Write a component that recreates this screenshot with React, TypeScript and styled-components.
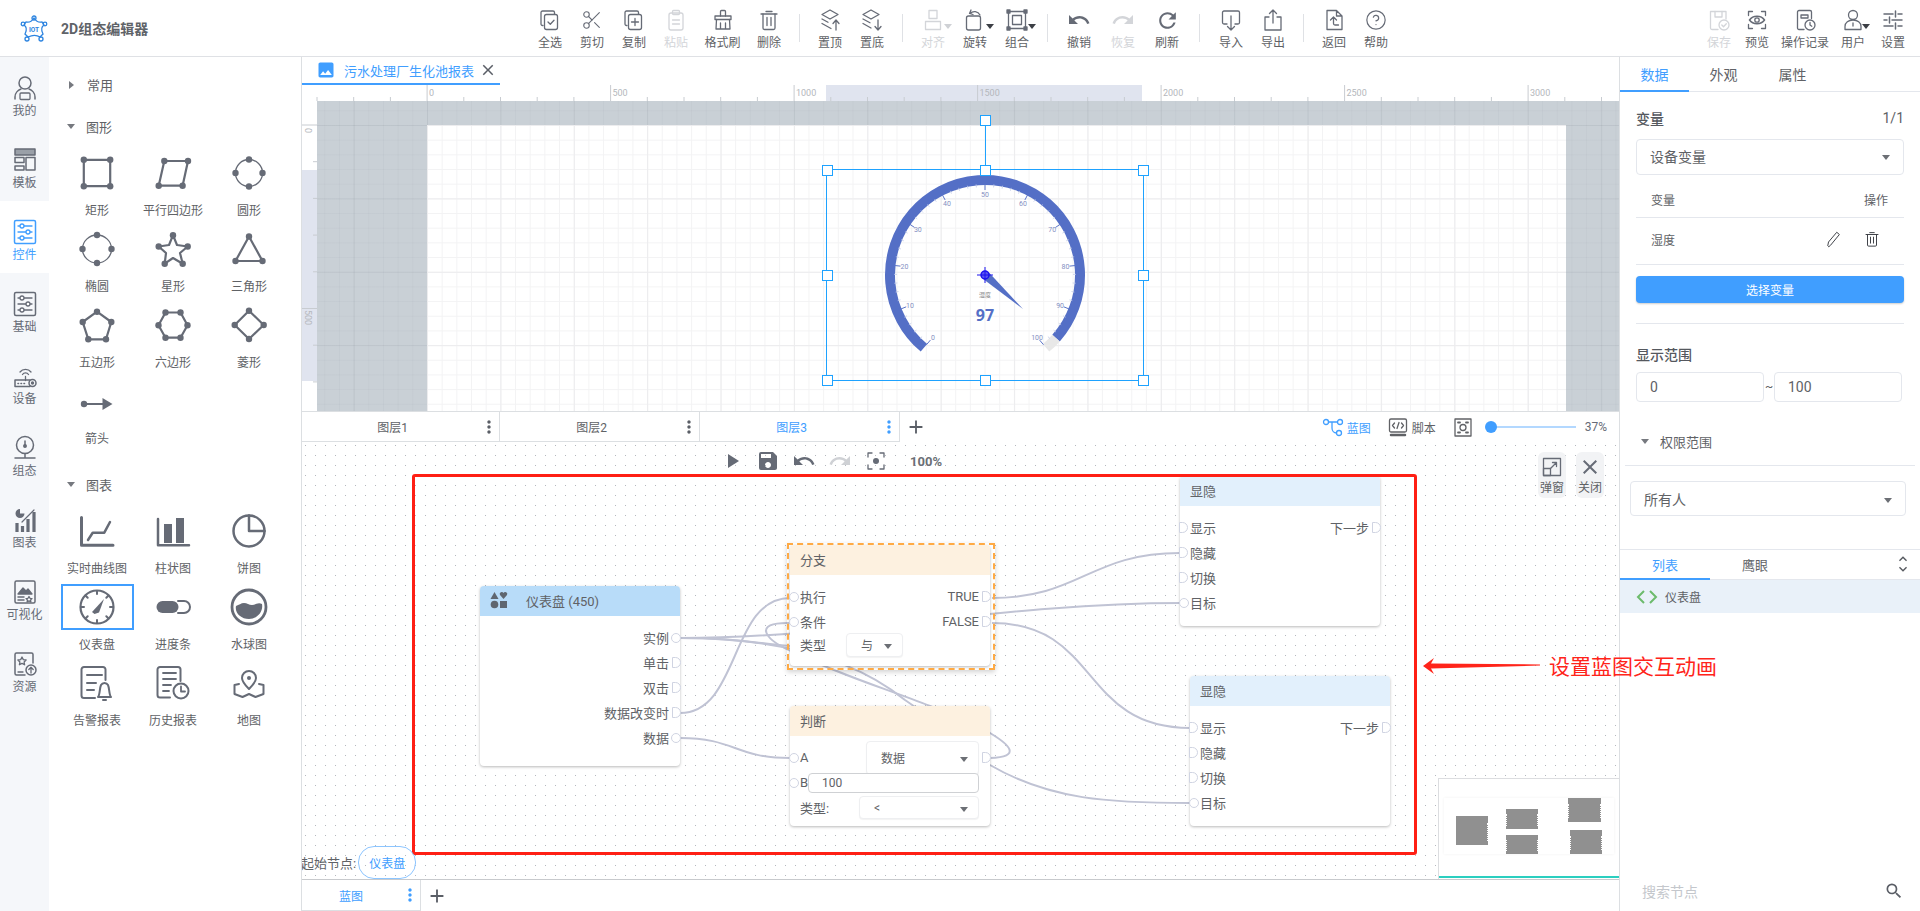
import React from 'react'
import styled, { createGlobalStyle } from 'styled-components'
import { Scissors, CircleHelp } from 'lucide-react'
import {
  MdUndo,
  MdRedo,
  MdRefresh,
  MdPlayArrow,
  MdSave,
  MdMoreVert,
  MdAdd,
  MdClose,
  MdImage,
  MdSearch,
  MdKeyboardArrowUp,
  MdKeyboardArrowDown,
} from 'react-icons/md'

const BLUE = '#409eff'
const TEXT = '#606266'
const ICON = '#666b76'

const GlobalStyle = createGlobalStyle`
  html, body {
    margin: 0;
    padding: 0;
    background: #fff;
    overflow: hidden;
    font-family: Roboto, "Noto Sans CJK SC", sans-serif;
    font-size: 12px;
    color: ${TEXT};
  }
  * { box-sizing: border-box; }
`

const Page = styled.div`
  position: relative;
  width: 1920px;
  height: 911px;
  display: flex;
  flex-direction: column;
  overflow: hidden;
`

const Line = styled.svg`
  fill: none;
  stroke: currentColor;
  stroke-width: 1.3;
  stroke-linejoin: round;
  stroke-linecap: round;
  display: block;
`

/* header */
const Header = styled.header`
  height: 57px;
  flex: none;
  display: flex;
  border-bottom: 1px solid #dfe1e5;
  padding-right: 6px;
`

const Brand = styled.div`
  width: 529px;
  flex: none;
  display: flex;
  align-items: center;
  padding-left: 20px;
  gap: 13px;
  height: 56px;
`

const BrandTitle = styled.span`
  font-size: 14px;
  font-weight: 700;
  color: #5f6368;
`

const Tool = styled.div<{ $w?: number; $off?: boolean }>`
  position: relative;
  width: ${(p) => p.$w ?? 42}px;
  flex: none;
  padding-top: 7px;
  display: flex;
  flex-direction: column;
  align-items: center;
  color: ${(p) => (p.$off ? '#d3d5d9' : ICON)};
`

const ToolIcon = styled.div`
  height: 26px;
  display: flex;
  align-items: center;
  justify-content: center;
`

const ToolLabel = styled.span<{ $off?: boolean }>`
  margin-top: 2px;
  line-height: 16px;
  white-space: nowrap;
  color: ${(p) => (p.$off ? '#d3d5d9' : TEXT)};
`

const ToolCaret = styled.i<{ $off?: boolean }>`
  position: absolute;
  right: 2px;
  top: 24px;
  border-left: 4px solid transparent;
  border-right: 4px solid transparent;
  border-top: 5px solid ${(p) => (p.$off ? '#cfd1d5' : '#3c3f45')};
`

const ToolSep = styled.div<{ $l?: number; $r?: number }>`
  width: 1px;
  height: 28px;
  flex: none;
  margin: 14px ${(p) => p.$r ?? 9}px 0 ${(p) => p.$l ?? 9}px;
  background: #dfe1e5;
`

const Spacer = styled.div`
  flex: 1;
`

/* body */
const Body = styled.div`
  flex: 1;
  display: flex;
  min-height: 0;
`

const Rail = styled.nav`
  width: 49px;
  flex: none;
  background: #f5f7fa;
`

const RailItem = styled.div<{ $active?: boolean }>`
  height: 72px;
  padding-top: 16px;
  display: flex;
  flex-direction: column;
  align-items: center;
  color: ${(p) => (p.$active ? BLUE : ICON)};
  background: ${(p) => (p.$active ? '#fff' : 'transparent')};
`

const RailLabel = styled.span`
  line-height: 16px;
  white-space: nowrap;
  color: inherit;
`

const ShapePanel = styled.aside`
  width: 252px;
  flex: none;
  padding-top: 9px;
`

const SectionHead = styled.div`
  height: 40px;
  display: flex;
  align-items: center;
  padding-left: 19px;
  font-size: 13px;
`

const FirstHead = styled(SectionHead)`
  padding-bottom: 3px;
`

const Tri = styled.i<{ $open?: boolean }>`
  width: 0;
  height: 0;
  margin-right: ${(p) => (p.$open ? 11 : 13)}px;
  ${(p) =>
    p.$open
      ? `border-left: 4.5px solid transparent; border-right: 4.5px solid transparent; border-top: 5px solid #76797f; margin-left: -1px;`
      : `border-top: 4.5px solid transparent; border-bottom: 4.5px solid transparent; border-left: 5px solid #76797f; margin-left: 1px;`}
`

const ShapeGrid = styled.div<{ $mb?: number }>`
  display: grid;
  grid-template-columns: repeat(3, 76px);
  grid-auto-rows: 76px;
  margin: 4px 0 ${(p) => p.$mb ?? 0}px 10px;
`

const Cell = styled.div`
  display: flex;
  flex-direction: column;
  align-items: center;
`

const CellIcon = styled.div<{ $on?: boolean }>`
  width: 73px;
  height: 46px;
  display: flex;
  align-items: center;
  justify-content: center;
  color: ${ICON};
  border: 2px solid ${(p) => (p.$on ? BLUE : 'transparent')};
`

const CellLabel = styled.span`
  margin-top: 6px;
  line-height: 18px;
  white-space: nowrap;
`

const Center = styled.main`
  width: 1319px;
  flex: none;
  border-left: 1px solid #dcdfe2;
  border-right: 1px solid #dcdfe2;
  display: flex;
  flex-direction: column;
`

const DocTabs = styled.div`
  height: 28px;
  flex: none;
  display: flex;
`

const DocTab = styled.div`
  width: 198px;
  border-bottom: 2px solid ${BLUE};
  display: flex;
  align-items: center;
  padding-left: 14px;
  color: ${BLUE};
  font-size: 13px;
  white-space: nowrap;
  svg { flex: none; }
`

const DocTabText = styled.span`
  margin: 0 5px 0 8px;
`

const CloseMark = styled.span`
  display: flex;
  color: #5a5e66;
`

const Canvas = styled.section`
  height: 327px;
  flex: none;
  border-bottom: 1px solid #dcdfe2;
  display: flex;
  flex-direction: column;
  overflow: hidden;
`

const TopRulerRow = styled.div`
  height: 16px;
  flex: none;
  display: flex;
`

const CanvasBody = styled.div`
  flex: 1;
  display: flex;
  min-height: 0;
`

const gridLines = (minor: string, major: string, ox: number, oy: number) => `
  background-image:
    linear-gradient(to right, ${major} 1px, transparent 1px),
    linear-gradient(to bottom, ${major} 1px, transparent 1px),
    linear-gradient(to right, ${minor} 1px, transparent 1px),
    linear-gradient(to bottom, ${minor} 1px, transparent 1px);
  background-size: 73.4px 73.4px, 73.4px 73.4px, 14.68px 14.68px, 14.68px 14.68px;
  background-position: ${ox}px ${oy}px;
`

const Stage = styled.div`
  flex: 1;
  display: flex;
  padding: 24px 53px 0 110px;
  background-color: #c9d0d6;
  ${gridLines('rgba(120,130,140,.06)', 'rgba(120,130,140,.1)', 110, 24)}
`

const Sheet = styled.div`
  flex: 1;
  position: relative;
  background-color: #fff;
  ${gridLines('#f3f3f4', '#ececee', 0, 0)}
`

const Selection = styled.div`
  position: absolute;
  left: 399px;
  top: 44px;
  width: 318px;
  height: 212px;
  border: 1px solid #1ea2ff;
`

const Handle = styled.i<{ $x: string; $y: string }>`
  position: absolute;
  left: ${(p) => p.$x};
  top: ${(p) => p.$y};
  width: 11px;
  height: 11px;
  margin: -5.5px 0 0 -5.5px;
  background: #fff;
  border: 1.5px solid #1ea2ff;
`

const RotateStem = styled.i`
  position: absolute;
  left: 50%;
  top: -50px;
  width: 1px;
  height: 50px;
  background: #1ea2ff;
`

const GaugeSvg = styled.svg`
  position: absolute;
  left: -1px;
  top: -1px;
`

const LayerBar = styled.div`
  height: 30px;
  flex: none;
  display: flex;
`

const LayerTab = styled.div<{ $w?: number; $on?: boolean }>`
  width: ${(p) => p.$w ?? 200}px;
  flex: none;
  border-right: 1px solid #dcdfe2;
  border-bottom: 1px solid #dcdfe2;
  display: flex;
  align-items: center;
  color: ${(p) => (p.$on ? BLUE : TEXT)};
`

const LayerName = styled.span`
  flex: 1;
  text-align: center;
  padding-left: 4px;
`

const LayerDots = styled.span<{ $on?: boolean }>`
  display: flex;
  color: ${(p) => (p.$on ? BLUE : '#5a5e66')};
`

const AddTab = styled.span`
  margin-left: 5px;
  display: flex;
  align-items: center;
  color: #5a5e66;
`

const ViewTools = styled.div`
  margin-left: auto;
  display: flex;
  align-items: center;
  padding-right: 12px;
  color: ${ICON};
`

const ViewItem = styled.div<{ $on?: boolean; $mr?: number; $gap?: number }>`
  display: flex;
  align-items: center;
  gap: ${(p) => p.$gap ?? 4}px;
  margin-right: ${(p) => p.$mr ?? 18}px;
  color: ${(p) => (p.$on ? BLUE : TEXT)};
`

const SliderTrack = styled.div`
  position: relative;
  width: 85px;
  height: 2px;
  background: #b3d8ff;
  margin-right: 9px;
`

const SliderKnob = styled.i`
  position: absolute;
  left: -6px;
  top: -5px;
  width: 12px;
  height: 12px;
  border-radius: 50%;
  background: ${BLUE};
`

const Blueprint = styled.section`
  position: relative;
  height: 438px;
  flex: none;
  overflow: hidden;
  border-bottom: 1px solid #c8cacd;
  background-color: #fff;
  background-image: radial-gradient(circle at 0.5px 0.5px, #b4b8be 0.6px, transparent 0.8px);
  background-size: 10px 10px;
  background-position: 3px 3px;
`

const BpTools = styled.div`
  position: absolute;
  left: 418px;
  top: 7px;
  display: flex;
  align-items: center;
  gap: 12px;
  color: ${ICON};
`

const BpZoomText = styled.span`
  margin-left: 10px;
  font-size: 13px;
  font-weight: 700;
  color: #6b6f76;
`

const WireLayer = styled.svg`
  position: absolute;
  left: 0;
  top: 0;
  fill: none;
  stroke: #c0c3d4;
  stroke-width: 2;
`

const Node = styled.div<{ $x: number; $y: number; $h: number }>`
  position: absolute;
  left: ${(p) => p.$x - 302}px;
  top: ${(p) => p.$y - 442}px;
  width: 200px;
  height: ${(p) => p.$h}px;
  background: #fff;
  border-radius: 4px;
  box-shadow: 0 1px 3px rgba(0, 0, 0, 0.28);
`

const NodeHead = styled.div<{ $bg: string }>`
  height: 30px;
  display: flex;
  align-items: center;
  padding: 0 0 2px 10px;
  font-size: 13px;
  border-radius: 4px 4px 0 0;
  background: ${(p) => p.$bg};
`

const NodeHeadIcon = styled.span`
  display: flex;
  width: 36px;
  color: #5f6670;
`

const NodeBody = styled.div`
  padding-top: 9px;
`

const Row = styled.div<{ $h?: number }>`
  position: relative;
  height: ${(p) => p.$h ?? 25}px;
  padding: 0 11px 0 10px;
  display: flex;
  align-items: center;
  font-size: 13px;
  white-space: nowrap;
`

const RowEnd = styled.span`
  margin-left: auto;
`

const Port = styled.i<{ $side: 'l' | 'r'; $round?: boolean }>`
  position: absolute;
  ${(p) => (p.$side === 'l' ? 'left: -1px;' : 'right: -1px;')}
  top: 50%;
  width: ${(p) => (p.$round ? 10 : 9)}px;
  height: ${(p) => (p.$round ? 10 : 11)}px;
  margin-top: ${(p) => (p.$round ? -5 : -5.5)}px;
  background: #fff;
  border: 1px solid #d0d4e2;
  border-radius: ${(p) => (p.$round ? '50%' : '0 6px 6px 0')};
`

const NodeSelect = styled.div<{ $w: number; $h: number; $ml?: string }>`
  flex: none;
  width: ${(p) => p.$w}px;
  height: ${(p) => p.$h}px;
  margin-left: ${(p) => p.$ml ?? 'auto'};
  background: #fff;
  border: 1px solid #eeeff1;
  border-radius: 4px;
  box-shadow: 0 1px 1px rgba(0, 0, 0, 0.05);
  display: flex;
  align-items: center;
  justify-content: space-between;
  padding: 0 10px 0 14px;
  font-size: 12px;
`

const NodeInput = styled.div`
  flex: none;
  width: 171px;
  height: 20px;
  margin-left: auto;
  position: relative;
  background: #fff;
  border: 1px solid #cfd1d4;
  border-radius: 4px;
  display: flex;
  align-items: center;
  padding-left: 13px;
  font-size: 12px;
`

const SelectedFrame = styled.div`
  position: absolute;
  left: 484.5px;
  top: 100.5px;
  width: 208px;
  height: 127px;
  border: 2px dashed #ffaa44;
  box-shadow: 0 2px 5px rgba(0, 0, 0, 0.18);
  pointer-events: none;
`

const RedBox = styled.div`
  position: absolute;
  left: 110px;
  top: 32px;
  width: 1005px;
  height: 381px;
  border: 3px solid #ff1f14;
  border-radius: 3px;
`

const FloatBtns = styled.div`
  position: absolute;
  top: 10px;
  right: 15px;
  display: flex;
  gap: 10px;
`

const FloatBtn = styled.div`
  width: 28px;
  height: 46px;
  border-radius: 6px;
  background: #f2f3f5;
  display: flex;
  flex-direction: column;
  align-items: center;
  padding-top: 3px;
  color: ${ICON};
  white-space: nowrap;
`

const FloatLabel = styled.span`
  margin-top: 1px;
  line-height: 16px;
  color: ${TEXT};
`

const StartNode = styled.div`
  position: absolute;
  left: -1px;
  bottom: 0;
  display: flex;
  align-items: center;
  font-size: 13px;
  white-space: nowrap;
`

const StartPill = styled.span`
  width: 58px;
  height: 33px;
  margin-left: 2px;
  border: 1px solid #8cc5ff;
  border-radius: 16px;
  display: flex;
  align-items: center;
  justify-content: center;
  color: ${BLUE};
  font-size: 12px;
`

const Minimap = styled.div`
  position: absolute;
  right: 0;
  bottom: 0;
  width: 181px;
  height: 101px;
  background: #fff;
  border-top: 1px solid #dcdde0;
  border-left: 1px solid #dcdde0;
`

const MiniSheet = styled.div`
  position: absolute;
  left: 5px;
  top: 19px;
  width: 170px;
  height: 56px;
  background: #fff;
  box-shadow: 0 0 3px rgba(0, 0, 0, 0.06);
`

const MiniBlock = styled.i<{ $x: number; $y: number; $w: number; $h: number; $both?: boolean }>`
  position: absolute;
  left: ${(p) => p.$x}px;
  top: ${(p) => p.$y}px;
  width: ${(p) => p.$w}px;
  height: ${(p) => p.$h}px;
  background: #909090;

  &::after,
  &::before {
    content: '';
    position: absolute;
    top: 25%;
    height: 60%;
  }
  &::after {
    right: 0;
    border-right: 1px dotted #fff;
  }
  &::before {
    left: 0;
    ${(p) => (p.$both ? 'border-left: 1px dotted #fff;' : '')}
  }
`

const MiniBar = styled.i`
  position: absolute;
  left: 0;
  right: 0;
  bottom: 1px;
  height: 2px;
  background: #2bcfc0;
`

const BottomTabs = styled.div`
  height: 31px;
  flex: none;
  display: flex;
  align-items: center;
`

const BottomTab = styled.div`
  width: 119px;
  height: 100%;
  display: flex;
  align-items: center;
  border-right: 1px solid #dcdfe2;
  border-bottom: 1px solid #dcdfe2;
  color: ${BLUE};
`

const BottomName = styled.span`
  flex: 1;
  text-align: center;
`

/* right panel */
const Inspector = styled.aside`
  flex: 1;
  display: flex;
  flex-direction: column;
  min-width: 0;
`

const InsTabs = styled.div`
  height: 35px;
  flex: none;
  display: flex;
  border-bottom: 1px solid #e4e7ed;
`

const InsTab = styled.div<{ $on?: boolean; $w?: number }>`
  width: ${(p) => p.$w ?? 69}px;
  height: 35px;
  display: flex;
  align-items: center;
  justify-content: center;
  font-size: 14px;
  color: ${(p) => (p.$on ? BLUE : TEXT)};
  border-bottom: 2px solid ${(p) => (p.$on ? BLUE : 'transparent')};
`

const InsBlock = styled.div`
  padding: 0 16px;
`

const FieldHead = styled.div`
  margin-top: 16px;
  height: 20px;
  display: flex;
  justify-content: space-between;
  align-items: center;
  font-size: 14px;
`

const FieldTitle = styled.span`
  font-weight: 500;
  color: #55585e;
`

const InsSelect = styled.div`
  height: 36px;
  margin-top: 11px;
  border: 1px solid #e4e7ed;
  border-radius: 4px;
  display: flex;
  align-items: center;
  justify-content: space-between;
  padding: 0 13px 3px;
  font-size: 14px;
`

const DownTri = styled.i`
  width: 0;
  height: 0;
  margin-top: 3px;
  border-left: 4px solid transparent;
  border-right: 4px solid transparent;
  border-top: 5px solid #6c6f75;
`

const TableHead = styled.div`
  height: 43px;
  padding: 7px 16px 0 15px;
  display: flex;
  align-items: center;
  justify-content: space-between;
  border-bottom: 1px solid #e4e7ed;
`

const TableRow = styled.div`
  height: 47px;
  padding: 0 15px 4px;
  display: flex;
  align-items: center;
  border-bottom: 1px solid #e4e7ed;
`

const RowActions = styled.div`
  margin-left: auto;
  display: flex;
  gap: 21px;
  margin-right: 8px;
  color: #3c3f45;
`

const PrimaryButton = styled.div`
  height: 27px;
  margin-top: 11px;
  background: ${BLUE};
  color: #fff;
  border-radius: 4px;
  display: flex;
  align-items: center;
  justify-content: center;
  box-shadow: 0 1px 2px rgba(0, 0, 0, 0.2);
`

const Divider = styled.div`
  height: 1px;
  margin-top: 20px;
  background: #e4e7ed;
`

const RangeTitle = styled(FieldHead)`
  margin-top: 20px;
`

const RangeRow = styled.div`
  margin-top: 8px;
  width: 266px;
  display: flex;
  align-items: center;
  justify-content: space-between;
`

const RangeInput = styled.div`
  width: 128px;
  height: 30px;
  border: 1px solid #e4e7ed;
  border-radius: 4px;
  display: flex;
  align-items: center;
  padding-left: 13px;
  font-size: 14px;
`

const CollapseHead = styled.div`
  height: 48px;
  margin: 16px 5px 0;
  padding-left: 17px;
  display: flex;
  align-items: center;
  border-bottom: 1px solid #e4e7ed;
  font-size: 13px;
`

const AccessSelect = styled(InsSelect)`
  margin: 15px 14px 0 10px;
  height: 35px;
  padding: 0 13px;
`

const SubTabs = styled.div`
  margin-top: 33px;
  height: 31px;
  flex: none;
  display: flex;
  border-top: 1px solid #e4e7ed;
  border-bottom: 1px solid #e4e7ed;
`

const SubTab = styled(InsTab)`
  height: 30px;
  font-size: 13px;
`

const SubChevrons = styled.div`
  margin: -1px 9px 0 auto;
  display: flex;
  flex-direction: column;
  justify-content: center;
  color: #55585e;
  svg { margin: -3px 0; }
`

const TreeRow = styled.div`
  height: 33px;
  display: flex;
  align-items: center;
  padding-left: 16px;
  gap: 7px;
  background: #e9f1f9;
`

const SearchRow = styled.div`
  margin-top: auto;
  height: 40px;
  display: flex;
  align-items: center;
  justify-content: space-between;
  padding: 0 16px 0 22px;
  font-size: 14px;
  color: #c4c7cc;
`

const SearchIcon = styled.span`
  display: flex;
  color: #5a5e66;
`

const Callout = styled.div`
  position: absolute;
  left: 1549px;
  top: 652px;
  font-size: 21px;
  line-height: 30px;
  color: #ff241a;
  white-space: nowrap;
`

const CalloutArrow = styled.svg`
  position: absolute;
  left: 1423px;
  top: 658px;
`

/* icons */
const T = (props: { children: React.ReactNode; size?: number }) => (
  <Line width={props.size ?? 24} height={props.size ?? 24} viewBox="0 0 24 24">
    {props.children}
  </Line>
)

const stack = (
  <>
    <path d="M5 17.5H4.5A1.5 1.5 0 0 1 3 16V4.5A1.5 1.5 0 0 1 4.5 3H15a1.5 1.5 0 0 1 1.5 1.5V6" />
    <rect x="6.5" y="6.5" width="13" height="15" rx="2" />
  </>
)

const toolIcons = {
  all: <T>{stack}<path d="M10 14l2.3 2.3 3.7-4" /></T>,
  cut: <Scissors size={22} strokeWidth={1.2} />,
  copy: <T>{stack}<path d="M13 10.5v7M9.5 14h7" /></T>,
  paste: (
    <T>
      <rect x="5" y="5" width="14" height="17" rx="2" />
      <rect x="8.5" y="2.5" width="7" height="4" rx="1" />
      <path d="M8.5 12h7M8.5 16h7" />
    </T>
  ),
  brush: (
    <T>
      <path d="M9.5 8V3.5a1 1 0 0 1 1-1h3a1 1 0 0 1 1 1V8" />
      <path d="M4 8h16v3.5H4z" />
      <path d="M5.5 11.5L5 21h14l-.5-9.5M9.5 15v6M14.5 15v6" />
    </T>
  ),
  trash: (
    <T>
      <path d="M4 6h16M9 3.5h6" />
      <path d="M6 6v14a1.5 1.5 0 0 0 1.5 1.5h9A1.5 1.5 0 0 0 18 20V6" />
      <path d="M10 9.5v8M14 9.5v8" />
    </T>
  ),
  top: (
    <T>
      <path d="M12 2l8 4.5-8 4.5-8-4.5zM4 11l6 3.3M4 15.5l9 5" />
      <path d="M18 22v-9.5M15 15.5l3-3.5 3 3.5" />
    </T>
  ),
  bottom: (
    <T>
      <path d="M11 2l8 4.5-8 4.5-8-4.5zM3 11l7 3.8M3 15.5l8 4.5" />
      <path d="M18 12v10M15 18.5l3 3.5 3-3.5" />
    </T>
  ),
  align: (
    <T>
      <rect x="8" y="2.5" width="8" height="8" />
      <rect x="4.5" y="13.5" width="15" height="8" />
    </T>
  ),
  rotate: (
    <T>
      <rect x="3.5" y="8" width="14" height="14" rx="2" />
      <path d="M7 5.5c3-3 8-2.5 10 1.5M8 2L6.5 5.5 10 6.5" />
    </T>
  ),
  group: (
    <T>
      <rect x="3.5" y="3.5" width="17" height="17" />
      <rect x="7.5" y="7.5" width="9" height="9" />
      <rect x="2" y="2" width="3" height="3" fill="currentColor" />
      <rect x="19" y="2" width="3" height="3" fill="currentColor" />
      <rect x="2" y="19" width="3" height="3" fill="currentColor" />
      <rect x="19" y="19" width="3" height="3" fill="currentColor" />
    </T>
  ),
  imp: <T><path d="M8 16H5a1.5 1.5 0 0 1-1.5-1.5V4.5A1.5 1.5 0 0 1 5 3h14a1.5 1.5 0 0 1 1.5 1.5v10A1.5 1.5 0 0 1 19 16h-3M12 8v14M8.5 18.5L12 22l3.5-3.5" /></T>,
  exp: <T><path d="M8 9H4v13h16V9h-4M12 2v13M8.5 5.5L12 2l3.5 3.5" /></T>,
  back: (
    <T>
      <path d="M5 2.5h9.5L20 8v13.5H5zM14.5 2.5V8H20" />
      <path d="M8.5 12l3-3 3 3M11.5 9v6.5c0 .8.5 1.5 1.5 1.5h3.5" />
    </T>
  ),
  help: <CircleHelp size={22} strokeWidth={1.3} />,
  save: (
    <T>
      <path d="M11 21.5H5A1.5 1.5 0 0 1 3.5 20V3.5H19V11" />
      <path d="M8 3.5V9h7V3.5" />
      <circle cx="17" cy="17" r="5" />
      <path d="M14.8 17l1.7 1.7 2.8-3" />
    </T>
  ),
  view: (
    <T>
      <path d="M3.5 7.5v-4h4M16.5 3.5h4v4M20.5 16.5v4h-4M7.5 20.5h-4v-4" />
      <path d="M4.5 12c3.5-5 11.5-5 15 0-3.5 5-11.5 5-15 0z" strokeWidth="1.6" />
      <circle cx="12" cy="12" r="2.2" />
    </T>
  ),
  history: (
    <T>
      <path d="M11 21.5H6A1.5 1.5 0 0 1 4.5 20V4A1.5 1.5 0 0 1 6 2.5h11A1.5 1.5 0 0 1 18.5 4v6.5" />
      <path d="M8 7h7v3H8z" />
      <circle cx="17" cy="17" r="5" />
      <path d="M17 14.5V17l1.8 1.2" />
    </T>
  ),
  user: (
    <T>
      <circle cx="12" cy="7" r="4.5" />
      <path d="M4 21.5v-3c0-4 3.5-6.5 8-6.5s8 2.5 8 6.5v3zM12 15v3" />
    </T>
  ),
  setting: (
    <T>
      <path d="M3 6h9M17 6h4M14.5 3v6M3 12h3M11 12h10M8.5 9v6M3 18h9M17 18h4M14.5 15v6" strokeWidth="1.5" />
    </T>
  ),
}

const R = (props: { children: React.ReactNode }) => (
  <Line width={30} height={30} viewBox="0 0 30 30">
    {props.children}
  </Line>
)

const sliders = (
  <>
    <rect x="4.5" y="3.5" width="21" height="23" rx="1.5" strokeWidth="1.5" />
    <path d="M8 9h14M8 15h14M8 21h14" />
    <circle cx="12" cy="9" r="2" fill="#fff" />
    <circle cx="18" cy="15" r="2" fill="#fff" />
    <circle cx="12" cy="21" r="2" fill="#fff" />
  </>
)

const railIcons = {
  mine: (
    <R>
      <circle cx="15" cy="10" r="6" strokeWidth="1.5" />
      <path d="M5 26v-2c0-4 3-7 6-8M25 26v-2c0-4-3-7-6-8" strokeWidth="1.5" />
      <rect x="10" y="20" width="10" height="6.5" rx="1" />
    </R>
  ),
  template: (
    <R>
      <rect x="5" y="4" width="20" height="6" strokeWidth="1.5" fill="#9aa0a8" />
      <rect x="5" y="12.5" width="9" height="5" strokeWidth="1.5" />
      <rect x="5" y="21" width="9" height="4" strokeWidth="1.5" />
      <rect x="16" y="12.5" width="9" height="12.5" strokeWidth="1.5" />
    </R>
  ),
  widget: <R>{sliders}</R>,
  device: (
    <R>
      <path d="M10 11a7 7 0 0 1 11 0M12.5 13.5a3.5 3.5 0 0 1 6 0M15.5 15.5v4" />
      <rect x="5" y="19" width="15" height="6.5" strokeWidth="1.5" />
      <circle cx="22.5" cy="22" r="3.5" strokeWidth="1.5" fill="#f5f7fa" />
      <circle cx="22.5" cy="22" r="1" fill="currentColor" />
      <path d="M8 22.5h.5M11 22.5h.5M14 22.5h.5" strokeWidth="1.6" />
    </R>
  ),
  config: (
    <R>
      <circle cx="15" cy="12" r="8.5" strokeWidth="1.5" />
      <path d="M5 25h20M15 20.5V25M15 8v5" strokeWidth="1.5" />
      <circle cx="15" cy="13" r="1.3" fill="currentColor" />
    </R>
  ),
  chart: (
    <R>
      <path d="M10 4a4.5 4.5 0 1 0 4.5 4.5H10z" fill="currentColor" stroke="none" />
      <path d="M7 27v-9M12.5 27v-6M18 27V14M24 27V7" strokeWidth="3.2" strokeLinecap="butt" />
      <path d="M12 17l6-6 6-6" strokeWidth="1.2" />
    </R>
  ),
  visual: (
    <R>
      <rect x="5" y="4" width="20" height="22" rx="1.5" strokeWidth="1.5" />
      <path d="M8 17l5-6 3 3 2-2 4 5z" fill="currentColor" />
      <path d="M8 20h6M8 23h6" strokeWidth="1.5" />
      <path d="M19 19.5l1 1.8 2 .3-1.5 1.3.4 2-1.9-1-1.9 1 .4-2-1.5-1.3 2-.3z" fill="#fff" />
    </R>
  ),
  res: (
    <R>
      <path d="M15 26H6.5A1.5 1.5 0 0 1 5 24.5V5.5A1.5 1.5 0 0 1 6.5 4h15A1.5 1.5 0 0 1 23 5.5V14" strokeWidth="1.5" />
      <path d="M12 8l1.3 2.6 2.8.4-2 2 .5 2.8-2.6-1.4-2.6 1.4.5-2.8-2-2 2.8-.4z" />
      <circle cx="21" cy="21" r="5" strokeWidth="1.5" />
      <path d="M21 24v-5.5M18.8 20.5l2.2-2.3 2.2 2.3M8 23h5" />
    </R>
  ),
}

const S = (props: { children: React.ReactNode }) => (
  <Line width={40} height={40} viewBox="0 0 40 40" strokeWidth="2">
    {props.children}
  </Line>
)

const Dots = ({ pts }: { pts: number[][] }) => (
  <>
    {pts.map(([x, y]) => (
      <circle key={`${x}-${y}`} cx={x} cy={y} r="3.2" fill="currentColor" stroke="none" />
    ))}
  </>
)

const Poly = ({ pts }: { pts: number[][] }) => (
  <S>
    <polygon points={pts.map((p) => p.join(',')).join(' ')} strokeWidth="2.2" />
    <Dots pts={pts} />
  </S>
)

const starOuter = [
  [20, 6.2],
  [34.7, 17.5],
  [29.7, 34.7],
  [11.7, 34.7],
  [5.7, 17.5],
]
const starPath = [
  [20, 6.2],
  [24, 16],
  [34.7, 17.5],
  [27, 24],
  [29.7, 34.7],
  [20, 29],
  [11.7, 34.7],
  [13, 24],
  [5.7, 17.5],
  [16, 16],
]

const shapeIcons: Record<string, React.ReactNode> = {
  rect: <Poly pts={[[6.8, 6.8], [33.2, 6.8], [33.2, 33.2], [6.8, 33.2]]} />,
  para: <Poly pts={[[11.3, 8], [35, 8], [29.6, 32.7], [5.7, 32.7]]} />,
  circle: (
    <S>
      <circle cx="20" cy="20" r="13.5" />
      <Dots pts={[[20, 6.5], [33.5, 20], [20, 33.5], [6.5, 20]]} />
    </S>
  ),
  ellipse: (
    <S>
      <ellipse cx="20" cy="20" rx="14.5" ry="14" />
      <Dots pts={[[20, 6], [34.5, 20], [20, 34], [5.5, 20]]} />
    </S>
  ),
  star: (
    <S>
      <polygon points={starPath.map((p) => p.join(',')).join(' ')} strokeWidth="2.2" />
      <Dots pts={starOuter} />
    </S>
  ),
  tri: <Poly pts={[[20, 7.5], [33.5, 32], [6.5, 32]]} />,
  penta: <Poly pts={[[20, 6.7], [34.3, 17], [29, 34.3], [11.3, 34.3], [5.7, 17]]} />,
  hexa: <Poly pts={[[12.5, 7.5], [27.5, 7.5], [34.5, 20.3], [27.5, 32.7], [12.5, 32.7], [5.5, 20.3]]} />,
  diamond: <Poly pts={[[20, 5.7], [34.7, 20], [20, 34], [5.7, 20]]} />,
  arrow: (
    <S>
      <path d="M7 23h22" strokeWidth="2.2" />
      <circle cx="7" cy="23" r="3.2" fill="currentColor" stroke="none" />
      <polygon points="25.5,17 35.5,23 25.5,29" fill="currentColor" stroke="none" />
    </S>
  ),
  line: (
    <S>
      <path d="M4.5 6.5V34.3h31.5" strokeWidth="3" />
      <path d="M11 29l4.7-7.3h11.6L33 11" strokeWidth="2.5" />
    </S>
  ),
  bar: (
    <S>
      <path d="M5 8v26.3h31" strokeWidth="2.5" />
      <rect x="11" y="13" width="8" height="19" fill="currentColor" stroke="none" />
      <rect x="23" y="7" width="8" height="25" fill="currentColor" stroke="none" />
    </S>
  ),
  pie: (
    <S>
      <circle cx="20" cy="20" r="15.5" strokeWidth="2.5" />
      <path d="M20 4.5V20h15.5" strokeWidth="2.5" />
    </S>
  ),
  gauge: (
    <S>
      <circle cx="20" cy="20" r="16.5" strokeWidth="2.2" />
      <path d="M20 4v3M20 33v3M4 20h3M33 20h3M8.7 8.7l2 2M31.3 8.7l-2 2M8.7 31.3l2-2M31.3 31.3l-2-2" strokeWidth="2" />
      <polygon points="15,25 27,12 22,25.5 17.5,27" fill="currentColor" stroke="none" />
    </S>
  ),
  progress: (
    <S>
      <rect x="3.5" y="14" width="22" height="12" rx="6" fill="currentColor" stroke="none" />
      <path d="M25 14h6a6 6 0 0 1 0 12h-6" strokeWidth="2" />
    </S>
  ),
  liquid: (
    <S>
      <circle cx="20" cy="20" r="17" strokeWidth="2.8" />
      <path d="M7 19c3-1 5-3 8-3s5 2 8 2 6-3 10-1c1.5 8-5 15-13 15S5.5 26 7 19z" fill="currentColor" stroke="none" />
    </S>
  ),
  alarm: (
    <S>
      <path d="M18 35H7a2.5 2.5 0 0 1-2.5-2.5V6.5A2.5 2.5 0 0 1 7 4h19a2.5 2.5 0 0 1 2.5 2.5V17" strokeWidth="2" />
      <path d="M10 12h15M10 20h9M10 27h7" strokeWidth="2" />
      <path d="M21 34c2-2 1.5-9 3-12a4 4 0 0 1 7 0c1.5 3 1 10 3 12z" strokeWidth="2" />
      <path d="M26 37h3" strokeWidth="2" />
    </S>
  ),
  history: (
    <S>
      <path d="M17 34.5H7a2.5 2.5 0 0 1-2.5-2.5V6.5A2.5 2.5 0 0 1 7 4h18a2.5 2.5 0 0 1 2.5 2.5V18" strokeWidth="2" />
      <path d="M10 10h13M10 16h13M10 22h8M10 28h6" strokeWidth="1.8" />
      <circle cx="28" cy="28" r="7.5" strokeWidth="2" />
      <path d="M28 23.5V28.5h4" strokeWidth="1.8" />
    </S>
  ),
  map: (
    <S>
      <path d="M20 26c-4-4-7-7-7-11a7 7 0 0 1 14 0c0 4-3 7-7 11z" strokeWidth="2" />
      <circle cx="20" cy="15" r="2" fill="currentColor" stroke="none" />
      <path d="M10 21L5.5 22v9l8 3 6.5-3 6.5 3 8-3V22L30 21" strokeWidth="2" />
    </S>
  ),
}

type ToolDef = { key: keyof typeof toolIcons | 'undo' | 'redo' | 'refresh'; label: string; w?: number; off?: boolean; caret?: boolean }

const iconFor = (key: ToolDef['key']) => {
  if (key === 'undo') return <MdUndo size={24} />
  if (key === 'redo') return <MdRedo size={24} />
  if (key === 'refresh') return <MdRefresh size={25} />
  return toolIcons[key]
}

const ToolButton = ({ def }: { def: ToolDef }) => (
  <Tool $w={def.w} $off={def.off}>
    <ToolIcon>{iconFor(def.key)}</ToolIcon>
    <ToolLabel $off={def.off}>{def.label}</ToolLabel>
    {def.caret && <ToolCaret $off={def.off} />}
  </Tool>
)

const GROUP_EDIT: ToolDef[] = [
  { key: 'all', label: '全选' },
  { key: 'cut', label: '剪切' },
  { key: 'copy', label: '复制' },
  { key: 'paste', label: '粘贴', off: true },
  { key: 'brush', label: '格式刷', w: 51 },
  { key: 'trash', label: '删除' },
]
const GROUP_ORDER: ToolDef[] = [
  { key: 'top', label: '置顶' },
  { key: 'bottom', label: '置底' },
]
const GROUP_ARRANGE: ToolDef[] = [
  { key: 'align', label: '对齐', off: true, caret: true },
  { key: 'rotate', label: '旋转', caret: true },
  { key: 'group', label: '组合', caret: true },
]
const GROUP_HISTORY: ToolDef[] = [
  { key: 'undo', label: '撤销', w: 44 },
  { key: 'redo', label: '恢复', w: 44, off: true },
  { key: 'refresh', label: '刷新', w: 44 },
]
const GROUP_IO: ToolDef[] = [
  { key: 'imp', label: '导入' },
  { key: 'exp', label: '导出' },
]
const GROUP_HELP: ToolDef[] = [
  { key: 'back', label: '返回' },
  { key: 'help', label: '帮助' },
]
const GROUP_RIGHT: ToolDef[] = [
  { key: 'save', label: '保存', w: 38, off: true },
  { key: 'view', label: '预览', w: 38 },
  { key: 'history', label: '操作记录', w: 58 },
  { key: 'user', label: '用户', w: 38, caret: true },
  { key: 'setting', label: '设置', w: 42 },
]

const RAIL = [
  { icon: railIcons.mine, label: '我的' },
  { icon: railIcons.template, label: '模板' },
  { icon: railIcons.widget, label: '控件', active: true },
  { icon: railIcons.widget, label: '基础' },
  { icon: railIcons.device, label: '设备' },
  { icon: railIcons.config, label: '组态' },
  { icon: railIcons.chart, label: '图表' },
  { icon: railIcons.visual, label: '可视化' },
  { icon: railIcons.res, label: '资源' },
]

const SHAPES = [
  ['rect', '矩形'],
  ['para', '平行四边形'],
  ['circle', '圆形'],
  ['ellipse', '椭圆'],
  ['star', '星形'],
  ['tri', '三角形'],
  ['penta', '五边形'],
  ['hexa', '六边形'],
  ['diamond', '菱形'],
  ['arrow', '箭头'],
]

const CHARTS = [
  ['line', '实时曲线图'],
  ['bar', '柱状图'],
  ['pie', '饼图'],
  ['gauge', '仪表盘'],
  ['progress', '进度条'],
  ['liquid', '水球图'],
  ['alarm', '告警报表'],
  ['history', '历史报表'],
  ['map', '地图'],
]

const Logo = () => (
  <svg width="28" height="27" viewBox="0 0 28 27" fill="none" stroke="#2d84e0" strokeWidth="1.3">
    <path d="M14 3c2 3 4 5 8 4l2 3c-3 2-3 5-1 9l-3 3c-3-2-8-2-12 0l-3-3c2-4 2-7-1-9l2-3c4 1 6-1 8-4z" />
    <circle cx="14" cy="3" r="2" />
    <circle cx="3" cy="9" r="1.8" />
    <circle cx="25" cy="9" r="1.8" />
    <circle cx="7" cy="24" r="2" />
    <circle cx="21" cy="24" r="2" />
    <text x="14" y="16.5" textAnchor="middle" fontSize="6.5" fontWeight="700" fill="#2d84e0" stroke="none">
      IOT
    </text>
  </svg>
)

const TICK_MAJOR = 36.7
const TopRuler = () => {
  const ticks = Array.from({ length: 36 }, (_, i) => i)
  return (
    <svg width="1302" height="16" viewBox="0 0 1302 16">
      <rect x="524" y="0" width="316" height="16" fill="#e0e4ef" />
      {ticks.map((i) => {
        const x = 15 + i * TICK_MAJOR
        const major = (i - 3) % 5 === 0
        return <line key={i} x1={x} x2={x} y1={major ? 0 : 12} y2="16" stroke="#c8ccd1" />
      })}
      {[0, 500, 1000, 1500, 2000, 2500, 3000].map((v, i) => (
        <text key={v} x={125 + i * 183.5 + 2} y="11" fontSize="9" fill="#b4b7bc">
          {v}
        </text>
      ))}
    </svg>
  )
}

const LeftRuler = () => {
  const ticks = Array.from({ length: 9 }, (_, i) => i)
  return (
    <svg width="15" height="310" viewBox="0 0 15 310" style={{ flex: 'none' }}>
      <rect x="0" y="69" width="15" height="211" fill="#e0e4ef" />
      {ticks.map((i) => {
        const y = 24 + i * TICK_MAJOR
        const major = i % 5 === 0
        return <line key={i} y1={y} y2={y} x1={major ? 0 : 11} x2="15" stroke="#c8ccd1" />
      })}
      <text transform="translate(3 27) rotate(90)" fontSize="9" fill="#b4b7bc">0</text>
      <text transform="translate(3 209) rotate(90)" fontSize="9" fill="#b4b7bc">500</text>
    </svg>
  )
}

/* gauge geometry, in the coordinates of the selection box */
const GX = 159
const GY = 106
const polar = (v: number, r: number) => {
  const a = ((230 - v * 2.8) * Math.PI) / 180
  return [GX + r * Math.cos(a), GY - r * Math.sin(a)]
}
const arc = (from: number, to: number, r: number) => {
  const [x1, y1] = polar(from, r)
  const [x2, y2] = polar(to, r)
  const large = (to - from) * 2.8 > 180 ? 1 : 0
  return `M${x1} ${y1}A${r} ${r} 0 ${large} 1 ${x2} ${y2}`
}

const Gauge = () => (
  <GaugeSvg width="318" height="212" viewBox="0 0 318 212" fill="none">
    <path d={arc(0, 97, 95)} stroke="#546fc6" strokeWidth="10" />
    <path d={arc(97, 100, 95)} stroke="#e8e8e8" strokeWidth="10" />
    {Array.from({ length: 51 }, (_, i) => i * 2).map((v) => {
      const major = v % 10 === 0
      const [x1, y1] = polar(v, 91)
      const [x2, y2] = polar(v, major ? 85 : 88)
      return <line key={v} x1={x1} y1={y1} x2={x2} y2={y2} stroke={major ? '#5a74c8' : '#c3cce8'} strokeWidth={major ? 1 : 0.8} />
    })}
    {Array.from({ length: 11 }, (_, i) => i * 10).map((v) => {
      const [x, y] = polar(v, 81)
      return (
        <text key={v} x={x} y={y + 2.5} fontSize="7" textAnchor="middle" fill="#8490c2" stroke="none">
          {v}
        </text>
      )
    })}
    <polygon points="156.5,109.5 162,102.5 197,140" fill="#546fc6" />
    <circle cx={GX} cy={GY} r="4" stroke="#1a12ee" strokeWidth="1.5" fill="#5a55f0" />
    <path d={`M${GX - 8} ${GY}H${GX + 8}M${GX} ${GY - 8}V${GY + 8}`} stroke="#1a12ee" strokeWidth="1" />
    <text x={GX} y={128} fontSize="6" textAnchor="middle" fill="#8a8a8a">
      湿度
    </text>
    <text x={GX} y={152} fontSize="16" fontWeight="700" fontFamily="'Open Sans', sans-serif" textAnchor="middle" fill="#546fc6">
      97
    </text>
  </GaugeSvg>
)

const HANDLES: [string, string][] = [
  ['0', '0'],
  ['50%', '0'],
  ['100%', '0'],
  ['0', '50%'],
  ['100%', '50%'],
  ['0', '100%'],
  ['50%', '100%'],
  ['100%', '100%'],
]

const Caret = () => <DownTri />

const MINI_BLOCKS: [number, number, number, number, boolean][] = [
  [12, 18, 32, 29, false],
  [62, 11, 32, 20, true],
  [62, 37, 32, 19, true],
  [124, 0, 33, 24, true],
  [126, 32, 32, 24, true],
]

const WIRES = [
  'M680 713C740 713 730 598 790 598',
  'M680 738C735 738 735 758 790 758',
  'M680 638C730 638 740 641 790 646',
  'M680 638C850 638 1000 603 1182 603',
  'M790 623C752 622 762 640 800 655C840 675 890 690 930 706C960 718 975 725 990 733C1010 745 1022 757 990 758',
  'M680 638C770 638 850 655 905 700C950 730 970 752 990 765C1050 800 1110 803 1190 803',
  'M992 598C1080 598 1090 553 1180 553',
  'M992 623C1100 623 1080 728 1190 728',
]

const EyeRows = ({ x, y }: { x: number; y: number }) => (
  <Node $x={x} $y={y} $h={150}>
    <NodeHead $bg="#e2f0fc">显隐</NodeHead>
    <NodeBody>
      <Row>
        <Port $side="l" />
        显示
        <RowEnd>下一步</RowEnd>
        <Port $side="r" />
      </Row>
      <Row>
        <Port $side="l" />
        隐藏
      </Row>
      <Row>
        <Port $side="l" />
        切换
      </Row>
      <Row>
        <Port $side="l" $round />
        目标
      </Row>
    </NodeBody>
  </Node>
)

export default function App() {
  return (
    <Page>
      <GlobalStyle />
      <Header>
        <Brand>
          <Logo />
          <BrandTitle>2D组态编辑器</BrandTitle>
        </Brand>
        {GROUP_EDIT.map((d) => <ToolButton key={d.label} def={d} />)}
        <ToolSep />
        {GROUP_ORDER.map((d) => <ToolButton key={d.label} def={d} />)}
        <ToolSep />
        {GROUP_ARRANGE.map((d) => <ToolButton key={d.label} def={d} />)}
        <ToolSep />
        {GROUP_HISTORY.map((d) => <ToolButton key={d.label} def={d} />)}
        <ToolSep $l={10} $r={10} />
        {GROUP_IO.map((d) => <ToolButton key={d.label} def={d} />)}
        <ToolSep />
        {GROUP_HELP.map((d) => <ToolButton key={d.label} def={d} />)}
        <Spacer />
        {GROUP_RIGHT.map((d) => <ToolButton key={d.label} def={d} />)}
      </Header>

      <Body>
        <Rail>
          {RAIL.map((item) => (
            <RailItem key={item.label} $active={item.active}>
              {item.icon}
              <RailLabel>{item.label}</RailLabel>
            </RailItem>
          ))}
        </Rail>

        <ShapePanel>
          <FirstHead><Tri />常用</FirstHead>
          <SectionHead><Tri $open />图形</SectionHead>
          <ShapeGrid $mb={10}>
            {SHAPES.map(([k, label]) => (
              <Cell key={k}>
                <CellIcon>{shapeIcons[k]}</CellIcon>
                <CellLabel>{label}</CellLabel>
              </Cell>
            ))}
          </ShapeGrid>
          <SectionHead><Tri $open />图表</SectionHead>
          <ShapeGrid>
            {CHARTS.map(([k, label]) => (
              <Cell key={k}>
                <CellIcon $on={k === 'gauge'}>{shapeIcons[k]}</CellIcon>
                <CellLabel>{label}</CellLabel>
              </Cell>
            ))}
          </ShapeGrid>
        </ShapePanel>

        <Center>
          <DocTabs>
            <DocTab>
              <MdImage size={20} />
              <DocTabText>污水处理厂生化池报表</DocTabText>
              <CloseMark><MdClose size={18} /></CloseMark>
            </DocTab>
          </DocTabs>

          <Canvas>
            <TopRulerRow>
              <TopRuler />
            </TopRulerRow>
            <CanvasBody>
              <LeftRuler />
              <Stage>
                <Sheet>
                  <Selection>
                    <Gauge />
                    <RotateStem />
                    <Handle $x="50%" $y="-50px" />
                    {HANDLES.map(([x, y]) => (
                      <Handle key={x + y} $x={x} $y={y} />
                    ))}
                  </Selection>
                </Sheet>
              </Stage>
            </CanvasBody>
          </Canvas>

          <LayerBar>
            <LayerTab $w={198}>
              <LayerName>图层1</LayerName>
              <LayerDots><MdMoreVert size={20} /></LayerDots>
            </LayerTab>
            <LayerTab>
              <LayerName>图层2</LayerName>
              <LayerDots><MdMoreVert size={20} /></LayerDots>
            </LayerTab>
            <LayerTab $on>
              <LayerName>图层3</LayerName>
              <LayerDots $on><MdMoreVert size={20} /></LayerDots>
            </LayerTab>
            <AddTab><MdAdd size={22} /></AddTab>
            <ViewTools>
              <ViewItem $on $gap={3} $mr={17}>
                <Line width={22} height={20} viewBox="0 0 22 20" strokeWidth="1.5">
                  <circle cx="4" cy="5" r="2.5" />
                  <circle cx="18" cy="5" r="2.5" />
                  <circle cx="17" cy="16" r="2.5" />
                  <path d="M6.5 5h9M10 5v6c0 3 2 5 4.5 5" />
                </Line>
                蓝图
              </ViewItem>
              <ViewItem>
                <Line width={20} height={20} viewBox="0 0 20 20">
                  <rect x="1.5" y="2" width="17" height="13" rx="1.5" />
                  <path d="M6.5 6L4.5 8.5l2 2.5M13.5 6l2 2.5-2 2.5M11 5.5L9 11.5" />
                  <path d="M3 18h14" strokeWidth="2.5" />
                </Line>
                脚本
              </ViewItem>
              <ViewItem $mr={19}>
                <Line width={18} height={20} viewBox="0 0 18 20">
                  <rect x="1" y="2" width="16" height="17" />
                  <circle cx="9" cy="10.5" r="3" />
                  <path d="M4 5.5h2M12 5.5h2M4 15.5h2M12 15.5h2" strokeWidth="1.8" />
                </Line>
              </ViewItem>
              <SliderTrack><SliderKnob /></SliderTrack>
              <span>37%</span>
            </ViewTools>
          </LayerBar>

          <Blueprint>
            <BpTools>
              <MdPlayArrow size={24} />
              <MdSave size={24} />
              <MdUndo size={24} />
              <MdRedo size={24} color="#cfd1d5" />
              <Line width={24} height={24} viewBox="0 0 24 24" strokeWidth="1.8">
                <path d="M4 8V4h4M16 4h4v4M20 16v4h-4M8 20H4v-4" />
                <circle cx="12" cy="12" r="3" fill="currentColor" stroke="none" />
              </Line>
              <BpZoomText>100%</BpZoomText>
            </BpTools>

            <WireLayer width="1317" height="437" viewBox="302 442 1317 437">
              {WIRES.map((d) => (
                <path key={d} d={d} />
              ))}
            </WireLayer>

            <Node $x={480} $y={586} $h={180}>
              <NodeHead $bg="#b8dcf9">
                <NodeHeadIcon>
                  <svg width="18" height="18" viewBox="0 0 18 18" fill="currentColor">
                    <polygon points="4.5,1 8.5,8 .5,8" />
                    <path d="M13.5 8l-3.5-4a2 2 0 0 1 3.5-2 2 2 0 0 1 3.5 2z" />
                    <circle cx="4.5" cy="13.5" r="3.8" />
                    <rect x="10" y="10" width="7" height="7" />
                  </svg>
                </NodeHeadIcon>
                仪表盘 (450)
              </NodeHead>
              <NodeBody>
                <Row><RowEnd>实例</RowEnd><Port $side="r" $round /></Row>
                <Row><RowEnd>单击</RowEnd><Port $side="r" /></Row>
                <Row><RowEnd>双击</RowEnd><Port $side="r" /></Row>
                <Row><RowEnd>数据改变时</RowEnd><Port $side="r" /></Row>
                <Row><RowEnd>数据</RowEnd><Port $side="r" $round /></Row>
              </NodeBody>
            </Node>

            <Node $x={790} $y={545} $h={121}>
              <NodeHead $bg="#fdf1e0">分支</NodeHead>
              <NodeBody>
                <Row>
                  <Port $side="l" $round />
                  执行
                  <RowEnd>TRUE</RowEnd>
                  <Port $side="r" />
                </Row>
                <Row>
                  <Port $side="l" $round />
                  条件
                  <RowEnd>FALSE</RowEnd>
                  <Port $side="r" />
                </Row>
                <Row $h={21}>
                  类型
                  <NodeSelect $w={57} $h={24} $ml="20px">与<Caret /></NodeSelect>
                </Row>
              </NodeBody>
            </Node>
            <SelectedFrame />

            <Node $x={790} $y={706} $h={120}>
              <NodeHead $bg="#fdf1e0">判断</NodeHead>
              <NodeBody>
                <Row>
                  <Port $side="l" $round />
                  A
                  <NodeSelect $w={113} $h={34}>数据<Caret /></NodeSelect>
                  <Port $side="r" />
                </Row>
                <Row>
                  <Port $side="l" $round />
                  B
                  <NodeInput>100</NodeInput>
                </Row>
                <Row>
                  类型:
                  <NodeSelect $w={120} $h={23}>&lt;<Caret /></NodeSelect>
                </Row>
              </NodeBody>
            </Node>

            <EyeRows x={1180} y={476} />
            <EyeRows x={1190} y={676} />

            <RedBox />

            <FloatBtns>
              <FloatBtn>
                <Line width={24} height={24} viewBox="0 0 24 24">
                  <rect x="3.5" y="3.5" width="17" height="17" />
                  <rect x="3.5" y="13.5" width="7" height="7" />
                  <path d="M10.5 13.5l6-6M12.5 7.5h4v4" />
                </Line>
                <FloatLabel>弹窗</FloatLabel>
              </FloatBtn>
              <FloatBtn>
                <MdClose size={24} />
                <FloatLabel>关闭</FloatLabel>
              </FloatBtn>
            </FloatBtns>

            <StartNode>
              起始节点:
              <StartPill>仪表盘</StartPill>
            </StartNode>

            <Minimap>
              <MiniSheet>
                {MINI_BLOCKS.map(([x, y, w, h, both]) => (
                  <MiniBlock key={`${x}-${y}`} $x={x} $y={y} $w={w} $h={h} $both={both} />
                ))}
              </MiniSheet>
              <MiniBar />
            </Minimap>
          </Blueprint>

          <BottomTabs>
            <BottomTab>
              <BottomName>蓝图</BottomName>
              <LayerDots $on><MdMoreVert size={20} /></LayerDots>
            </BottomTab>
            <AddTab><MdAdd size={22} /></AddTab>
          </BottomTabs>
        </Center>

        <Inspector>
          <InsTabs>
            <InsTab $on>数据</InsTab>
            <InsTab>外观</InsTab>
            <InsTab>属性</InsTab>
          </InsTabs>

          <InsBlock>
            <FieldHead>
              <FieldTitle>变量</FieldTitle>
              <span>1/1</span>
            </FieldHead>
            <InsSelect>设备变量<Caret /></InsSelect>
            <TableHead>
              <span>变量</span>
              <span>操作</span>
            </TableHead>
            <TableRow>
              <span>湿度</span>
              <RowActions>
                <Line width={18} height={18} viewBox="0 0 24 24" strokeWidth="1.8">
                  <path d="M6 22l-1-1 1-5L17 3l3.5 3L9 20z" />
                </Line>
                <Line width={18} height={18} viewBox="0 0 24 24" strokeWidth="1.8">
                  <path d="M4 6h16M9 3.5h6" />
                  <path d="M6 6v14a1.5 1.5 0 0 0 1.5 1.5h9A1.5 1.5 0 0 0 18 20V6" />
                  <path d="M10 9.5v8M14 9.5v8" />
                </Line>
              </RowActions>
            </TableRow>
            <PrimaryButton>选择变量</PrimaryButton>
            <Divider />
            <RangeTitle>
              <FieldTitle>显示范围</FieldTitle>
            </RangeTitle>
            <RangeRow>
              <RangeInput>0</RangeInput>
              ~
              <RangeInput>100</RangeInput>
            </RangeRow>
          </InsBlock>

          <CollapseHead><Tri $open />权限范围</CollapseHead>
          <AccessSelect>所有人<Caret /></AccessSelect>

          <SubTabs>
            <SubTab $on $w={90}>列表</SubTab>
            <SubTab $w={90}>鹰眼</SubTab>
            <SubChevrons>
              <MdKeyboardArrowUp size={16} />
              <MdKeyboardArrowDown size={16} />
            </SubChevrons>
          </SubTabs>
          <TreeRow>
            <svg width="22" height="16" viewBox="0 0 22 16" fill="none" stroke="#6cbb6c" strokeWidth="2">
              <path d="M8 2L2 8l6 6M14 2l6 6-6 6" />
            </svg>
            仪表盘
          </TreeRow>

          <SearchRow>
            搜索节点
            <SearchIcon><MdSearch size={20} /></SearchIcon>
          </SearchRow>
        </Inspector>
      </Body>

      <CalloutArrow width="120" height="16" viewBox="0 0 120 16">
        <polygon points="0,8 11,0 8,5.5 117,6.5 117,7.5 8,10.5 11,16" fill="#ff241a" />
      </CalloutArrow>
      <Callout>设置蓝图交互动画</Callout>
    </Page>
  )
}
